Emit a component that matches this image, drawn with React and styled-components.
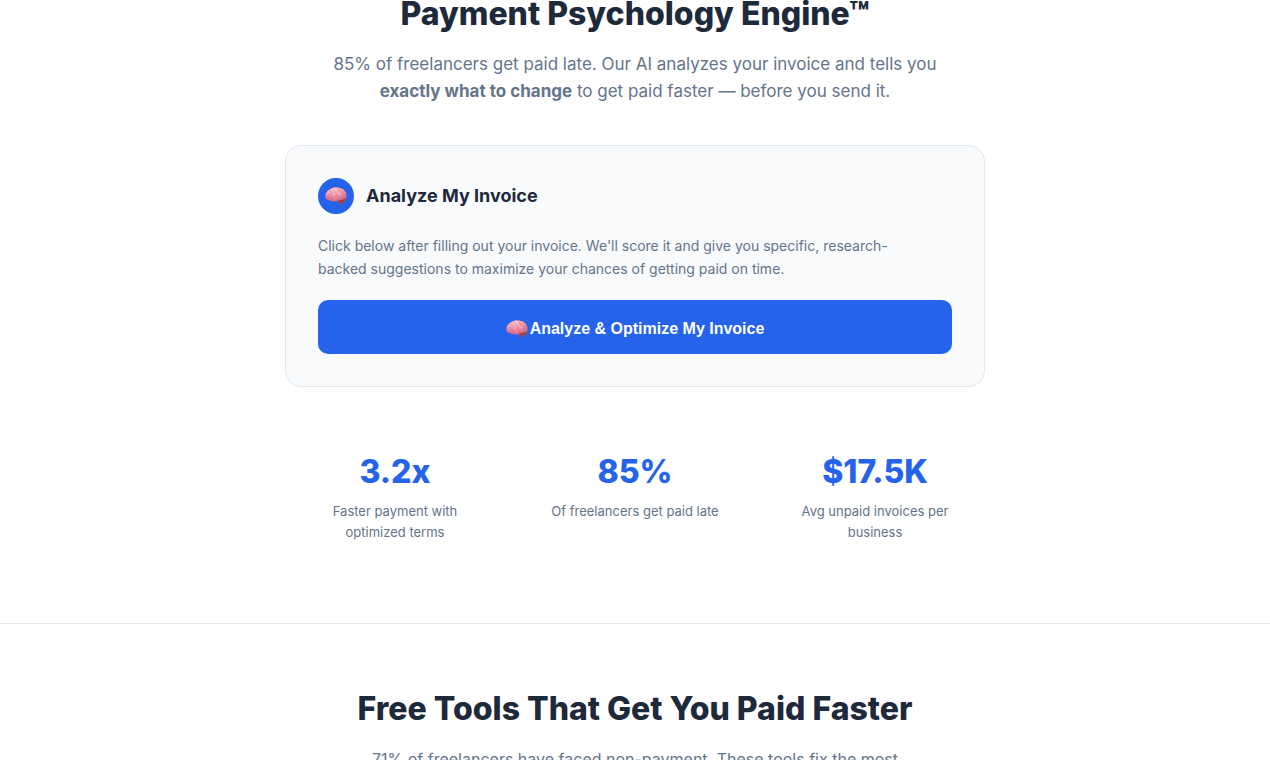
import React from 'react';
import styled, { createGlobalStyle } from 'styled-components';

const GlobalStyle = createGlobalStyle`
  :root {
    --blue: #2563eb;
    --dark: #1e293b;
    --slate: #64748b;
    --line: #e2e8f0;
    --card: #f8fafc;
  }

  * {
    box-sizing: border-box;
  }

  body {
    margin: 0;
    background: #ffffff;
    color: var(--dark);
    font-family: Inter, 'Liberation Sans', sans-serif;
    -webkit-font-smoothing: antialiased;
  }
`;

const Viewport = styled.main`
  height: 100vh;
  overflow: hidden;
`;

const Scrolled = styled.div`
  margin-top: -71px;
`;

const StyledSection = styled.section`
  padding: 60px 24px;
  border-bottom: 1px solid var(--line);

  .inner {
    max-width: 700px;
    margin: 0 auto;
  }
`;

const StyledHeading = styled.h2`
  margin: 0 0 12px;
  font-size: 32px;
  font-weight: 800;
  line-height: 50px;
  text-align: center;
`;

const StyledLead = styled.p`
  max-width: 620px;
  margin: 0 auto 40px;
  color: var(--slate);
  font-size: ${({ $small }) => ($small ? '16px' : '17px')};
  line-height: 27px;
  text-align: center;
`;

const StyledCard = styled.div`
  padding: 32px;
  border: 1px solid var(--line);
  border-radius: 16px;
  background: var(--card);

  header {
    display: flex;
    align-items: center;
    gap: 12px;
    margin-bottom: 20px;
  }

  h3 {
    margin: 0;
    font-size: 18px;
    font-weight: 700;
    line-height: 28px;
  }

  p {
    max-width: 600px;
    margin: 0 0 20px;
    color: var(--slate);
    font-size: 14px;
    line-height: 23px;
  }
`;

const StyledBadge = styled.span`
  display: flex;
  align-items: center;
  justify-content: center;
  width: 36px;
  height: 36px;
  border-radius: 50%;
  background: var(--blue);
`;

const StyledButton = styled.button`
  display: flex;
  align-items: center;
  justify-content: center;
  gap: 2px;
  width: 100%;
  padding: 18px 16px 14px;
  border: 0;
  border-radius: 10px;
  background: var(--blue);
  color: #ffffff;
  font-family: 'Liberation Sans', Arial, sans-serif;
  font-size: 16px;
  font-weight: 700;
  line-height: 22px;
  cursor: pointer;
`;

const StyledStats = styled.div`
  display: grid;
  grid-template-columns: repeat(3, 1fr);
  gap: 20px;
  margin-top: 40px;
`;

const StyledStat = styled.div`
  padding: 20px;
  text-align: center;

  strong {
    display: block;
    margin-bottom: 4px;
    color: var(--blue);
    font-size: 32px;
    font-weight: 800;
    line-height: 50px;
  }

  span {
    display: block;
    color: var(--slate);
    font-size: 13px;
    line-height: 21px;
  }
`;

const Brain = ({ id }) => (
  <svg width="22" height="18" viewBox="0 0 44 36" aria-hidden="true">
    <defs>
      <radialGradient id={id} cx="0.4" cy="0.2" r="0.8">
        <stop offset="0" stopColor="#ffc0cc" />
        <stop offset="0.55" stopColor="#f195ab" />
        <stop offset="1" stopColor="#cf6480" />
      </radialGradient>
    </defs>
    <path d="M26 26c0 4 2 8 5 9 2 .5 4-1 4-3v-6z" fill="#a8485c" />
    <path d="M25 26c4-3 13-5 18-4 0 5-4 9-10 10-4 0-8-2-8-6z" fill="#a94a55" />
    <path
      d="M1 20C0 12 5 6 11 4c5-4 14-4 19-2 7 1 12 7 13 13 1 6-1 9-5 9-3 2-7 2-10 2-3 4-8 4-12 2-3 1-7 0-8-2-4 0-7-2-7-6z"
      fill={`url(#${id})`}
    />
    <g fill="none" stroke="#c25a76" strokeWidth="1.2" strokeLinecap="round" opacity="0.7">
      <path d="M5 17c3 1 4-2 3-4M10 8c1 3 4 2 5 5s-2 5-5 4M17 5c0 3 3 2 3 5s4 2 5 5" />
      <path d="M27 5c-2 2 2 3 4 4s1 4 4 4 3 3 5 4" />
      <path d="M6 22c4-3 7 0 10-2s5-4 9-2 7-2 11 0M16 22c0 2-2 4-4 4M25 20c0 2 2 3 2 5" />
      <path d="M31 23c3-1 5 1 8-1" />
    </g>
    <g fill="none" stroke="#ffdbe1" strokeWidth="1.2" strokeLinecap="round" opacity="0.7">
      <path d="M12 7c2-2 3-2 4-2M20 5c2-1 3-1 5-1M6 14c0-2 1-3 2-4M29 14c1 2 3 2 4 2M15 17l3-1" />
    </g>
    <path d="M29 28c4 1 8-1 11-3M31 30c3 0 5-1 7-3" fill="none" stroke="#84344a" strokeWidth="1" />
  </svg>
);

const stats = [
  { value: '3.2x', label: 'Faster payment with optimized terms' },
  { value: '85%', label: 'Of freelancers get paid late' },
  { value: '$17.5K', label: 'Avg unpaid invoices per business' },
];

const App = () => (
  <>
    <GlobalStyle />
    <Viewport>
      <Scrolled>
        <StyledSection id="psychology">
          <div className="inner">
            <StyledHeading>Payment Psychology Engine™</StyledHeading>
            <StyledLead>
              85% of freelancers get paid late. Our AI analyzes your invoice and tells you{' '}
              <strong>exactly what to change</strong> to get paid faster — before you send it.
            </StyledLead>

            <StyledCard>
              <header>
                <StyledBadge>
                  <Brain id="brain-badge" />
                </StyledBadge>
                <h3>Analyze My Invoice</h3>
              </header>
              <p>
                Click below after filling out your invoice. We'll score it and give you specific,
                research-backed suggestions to maximize your chances of getting paid on time.
              </p>
              <StyledButton type="button">
                <Brain id="brain-button" />
                Analyze &amp; Optimize My Invoice
              </StyledButton>
            </StyledCard>

            <StyledStats>
              {stats.map(({ value, label }) => (
                <StyledStat key={label}>
                  <strong>{value}</strong>
                  <span>{label}</span>
                </StyledStat>
              ))}
            </StyledStats>
          </div>
        </StyledSection>

        <StyledSection id="tools">
          <div className="inner">
            <StyledHeading>Free Tools That Get You Paid Faster</StyledHeading>
            <StyledLead $small>
              71% of freelancers have faced non-payment. These tools fix the most
            </StyledLead>
          </div>
        </StyledSection>
      </Scrolled>
    </Viewport>
  </>
);

export default App;
